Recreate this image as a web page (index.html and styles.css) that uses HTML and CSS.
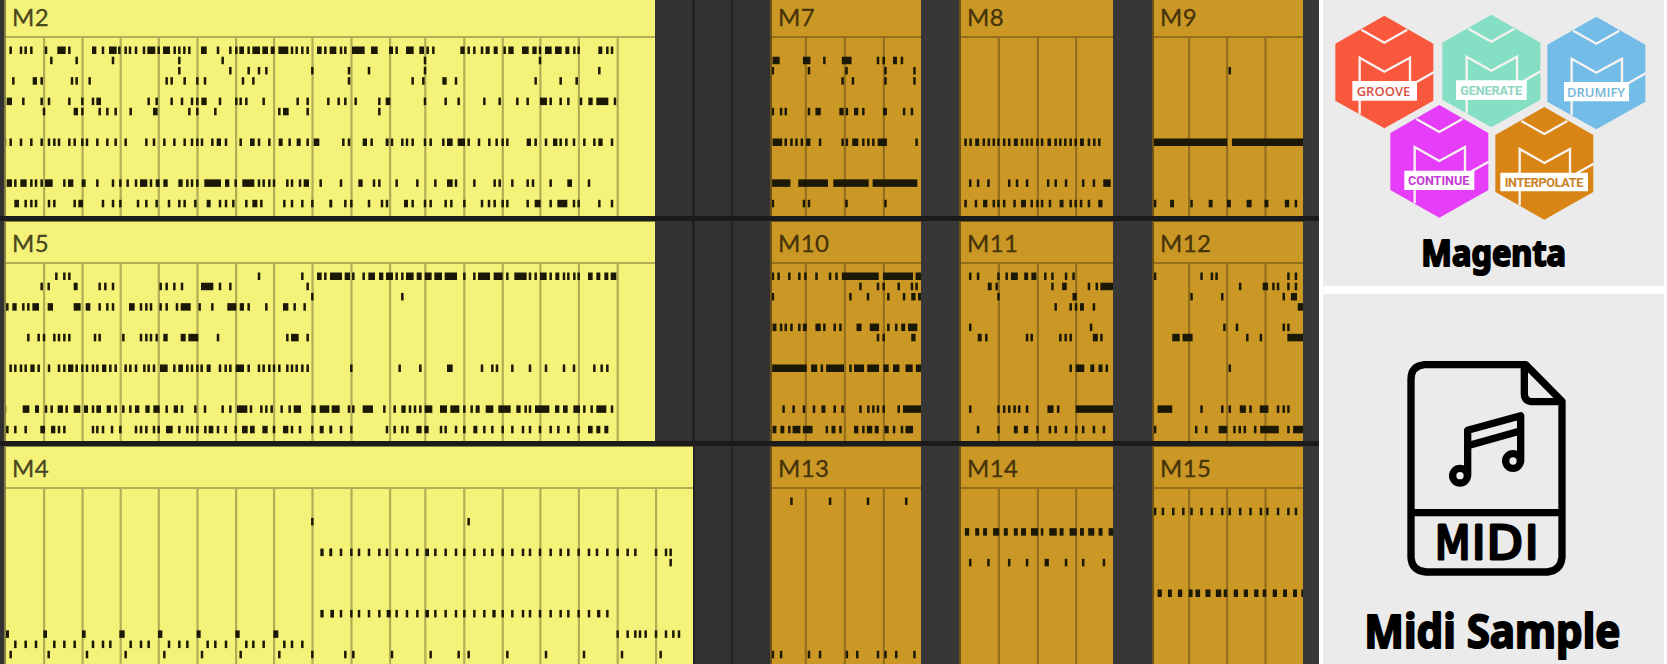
FILE: index.html
```html
<!DOCTYPE html>
<html lang="en">
<head>
<meta charset="utf-8">
<title>Arrangement</title>
<link rel="stylesheet" href="styles.css">
</head>
<body>
<main class="app">
  <section class="tracks">
    <div class="lane lane-top">
      <article class="clip lead" data-clip="M2"><h2 class="name">M2</h2></article>
      <article class="clip amber first" data-clip="M7"><h2 class="name">M7</h2></article>
      <article class="clip amber second" data-clip="M8"><h2 class="name">M8</h2></article>
      <article class="clip amber third" data-clip="M9"><h2 class="name">M9</h2></article>
    </div>
    <div class="lane">
      <article class="clip lead" data-clip="M5"><h2 class="name">M5</h2></article>
      <article class="clip amber first" data-clip="M10"><h2 class="name">M10</h2></article>
      <article class="clip amber second" data-clip="M11"><h2 class="name">M11</h2></article>
      <article class="clip amber third" data-clip="M12"><h2 class="name">M12</h2></article>
    </div>
    <div class="lane">
      <article class="clip lead long" data-clip="M4"><h2 class="name">M4</h2></article>
      <article class="clip amber first" data-clip="M13"><h2 class="name">M13</h2></article>
      <article class="clip amber second" data-clip="M14"><h2 class="name">M14</h2></article>
      <article class="clip amber third" data-clip="M15"><h2 class="name">M15</h2></article>
    </div>
  </section>
  <aside class="side">
    <section class="panel">
      <svg class="art" width="341" height="286" viewBox="39 0 1023 858">
        <defs>
          <path id="hex" d="M0 0L147 84V255L0 338L-147 255V84Z"/>
          <g id="lines" fill="none" stroke="#f8f3f1" stroke-width="7">
            <path d="M-69 42L0 81L69 42M-74 295V126L0 168L77 126V205M97 199L148 170"/>
          </g>
        </defs>
        <g transform="translate(223 47)"><use href="#hex" fill="#fa583d"/><use href="#lines"/></g>
        <g transform="translate(544 44)"><use href="#hex" fill="#84dfc4"/><use href="#lines"/></g>
        <g transform="translate(859 50)"><use href="#hex" fill="#72bce7"/><use href="#lines"/></g>
        <g transform="translate(388 315)"><use href="#hex" fill="#e53df8"/><use href="#lines"/></g>
        <g transform="translate(703 321)"><use href="#hex" fill="#d88515"/><use href="#lines"/></g>
        <g fill="#fff">
          <path d="M127 243h194v59H127zM438 241h212v59H438zM762 246h195v58H762zM283 512h210v58H283zM571 518h263v56H571z"/>
        </g>
        <text class="badge soft" x="140" y="288" textLength="161" lengthAdjust="spacingAndGlyphs" fill="#d94d40">GROOVE</text>
        <text class="badge" x="451" y="284" textLength="185" fill="#8dd5c2">GENERATE</text>
        <text class="badge soft" x="771" y="291" textLength="174" lengthAdjust="spacingAndGlyphs" fill="#74b5da">DRUMIFY</text>
        <text class="badge" x="294" y="555" textLength="184" fill="#c43bd4">CONTINUE</text>
        <text class="badge" x="584" y="560" textLength="236" fill="#c98226">INTERPOLATE</text>
        <text class="title" x="334" y="797" font-size="106" textLength="434" lengthAdjust="spacingAndGlyphs">Magenta</text>
      </svg>
    </section>
    <section class="panel grow">
      <svg class="art" width="341" height="370" viewBox="39 12 1023 1110">
        <g fill="none" stroke="#000" stroke-width="22" stroke-linejoin="round" stroke-linecap="round">
          <path d="M647 224H344Q303 228 303 268V802Q305 842 348 846H712Q752 842 756 802V334ZM643 230V314Q645 333 663 335H750M306 668H752"/>
          <path d="M473 556V421L632 377V513M478 466L628 424"/>
          <circle cx="450" cy="557" r="22"/>
          <circle cx="609" cy="513" r="22"/>
        </g>
        <text class="midi" y="807"><tspan x="375" textLength="106" lengthAdjust="spacingAndGlyphs">M</tspan><tspan x="486">I</tspan><tspan x="530" textLength="108" lengthAdjust="spacingAndGlyphs">D</tspan><tspan x="645">I</tspan></text>
        <text class="title" x="163" y="1074" font-size="138" textLength="768" lengthAdjust="spacingAndGlyphs">Midi Sample</text>
      </svg>
    </section>
  </aside>
</main>
<script src="clips.js"></script>
</body>
</html>
```
FILE: styles.css
```css
* { box-sizing: border-box; }
body { margin: 0; background: #fff; overflow: hidden; }
.app { display: flex; width: 1667px; height: 664px; gap: 4px; }

.tracks {
  flex: 0 0 1319px;
  display: flex;
  flex-direction: column;
  overflow: hidden;
  background:
    linear-gradient(#222, #222) 692px 0 / 3px 100% no-repeat,
    linear-gradient(#222, #222) 731px 0 / 2px 100% no-repeat,
    linear-gradient(90deg, #323232 770px, #373737 770px);
}
.lane {
  flex: 0 0 225.5px;
  display: flex;
  padding-left: 4px;
  border-bottom: 5px solid #1b1b1b;
}
.lane-top { margin-top: -5px; }

.clip {
  --fill: #f5f27a;
  --line: #b2ae56;
  --edge: #85823f;
  --ink: #49471f;
  flex: none;
  width: 651px;
  height: 220.5px;
  background: var(--fill);
  border-top: 1px solid var(--edge);
  border-left: 2px solid var(--edge);
  overflow: hidden;
}
.clip.long { width: 689px; }
.amber {
  --fill: #cb9826;
  --line: #95701c;
  --edge: #6f5215;
  --ink: #453309;
}
.first { width: 151px; margin-left: 115px; }
.long + .first { margin-left: 77px; }
.second { width: 154px; margin-left: 38px; }
.third { width: 151px; margin-left: 39px; }

.name {
  margin: 0;
  height: 42px;
  padding: 6px 0 0 6px;
  border-bottom: 2px solid var(--line);
  font: 400 24px/30px Lato, sans-serif;
  letter-spacing: 0.4px;
  color: var(--ink);
  -webkit-text-stroke: 0.3px var(--ink);
}
.roll { display: block; }
.roll .bar { fill: var(--line); }
.roll .note { fill: #1b1805; }

.side {
  flex: 0 0 341px;
  display: flex;
  flex-direction: column;
  gap: 8px;
}
.panel { background: #ebebeb; height: 286px; overflow: hidden; }
.grow { flex: 1; height: auto; }
.art { display: block; }
.badge { font: 700 38px Roboto, sans-serif; }
.soft { font: 600 39px "Open Sans", sans-serif; }
.title {
  font-family: "Noto Sans", sans-serif;
  font-weight: 700;
  stroke: #000;
  stroke-width: 6;
  stroke-linejoin: round;
}
.midi {
  font: 400 136px "DejaVu Sans", sans-serif;
  stroke: #000;
  stroke-width: 9;
  stroke-linejoin: round;
}
```
FILE: clips.js
```js
// Notes per clip: pitch row -> marks. "a" is a short hit, "a-b" a held note.
// A "|" starts the second page of a long clip.
const NOTES = {
  M2: {
    0: "32 63 77 94 138 172-197 208 276-289 309 327-350 358 377 390 408 432 442-466 476 489-510 524 538 553 568 603-620 654 691 709 718-732 746 757-780 787-804 812-824 835-865 876 890 907 923 951-965 976 989-1009 | 33 46 66-104 123-143 177-189 200 228-251 268-282 293 310 391-404 416 433 456 467-479 491-503 524 535-551 576-596 607-620 630 645-665 675-695 706-718 733 746 805-817 832 846",
    1: "154 230 339 538 668 | 285 630",
    2: "538 691 746 777 799 937 | 57 117 285 808",
    3: "40 98-111 125 216 230 269 500 515 554 592 615 729 760 | 57 248 280 337-350 378 617 692 740",
    5: "20-36 70 125 147 208 247 279 289-303 446 470 515 546 576 592 604-620 660 709 722 739 791 893 923 985 | 26 46 77 148 167-181 285 347 386 463 509 562 593 630-651 662 692 715 753 775-788 799-835 855",
    6: "132 221-234 247 299 322 347 392 459-473 568 592 646 838 849-866 923 | 148",
    9: "15 32 63 94 125 147 163 177 208 224 247 261 292 322 347 377 439 462 493 523 554 576 592 606 637 650-663 678 722 750-764 777 808 836-848 869 890-902 923 941-958 | 40 57 98-111 125 167-176 186 217 231 248 285 302 340 351-368 383-405 416 447 478 500 518 532 590-603 617 648 669-682 692 709 732 763 793 805-818 846",
    13: "20-36 46 61-80 94 108 125 135-158 193 204-220 245-257 292 339 361 383 408 420-442 453 467-479 490-503 535-548 562 576 592 613-663 675-688 707 727-763 777 791 808 822 862 876 900 911-927 962 | 33 85-98 132 148 200 262 316 351-368 378 433 494 509 547 593 609 662 712-726 777",
    15: "43-57 77 94 108 147 163 224 235-249 309 339 361 414 439 470 507 538 554 586 620-632 660 678 700 739 757-772 784 853 876 907 937 992 | 3 46 64 117 156 171 222-234 248 285 302 347 364 403 456 477 494 518 532 593 614-632 662 682-712 732 746 808 846"
  },
  M5: {
    0: "169 193 208 777 907 951-965 976 | 0-36 44-60 70 101 115-135 147-160 168-189 200 217 228-251 260-275 284-305 313-336 344-381 403 433 444-480 491-518 532 553-590 600 617 630-650 662 676-688 702 715 733 746 774-788 799-811 823-835 842-859",
    1: "125 146 221-233 299 316 339 482 500 523 546 603-640 660 691 923",
    2: "937 | 217",
    3: "22 37-50 70 85 97-117 143-159 221-242 257-271 299 322 339 387-404 423 439 453 482 500 531 542-572 599 637 682-709 719-732 746 799 849-865 884 914",
    6: "85 116 132 163 177 193 208 285 299 370 423 439 453 470 490-503 542-557 565-595 654 862 873-896 923",
    9: "32 46 63 77 91-104 116 147 177 193 204-220 230 247 261 279 292 306-319 331 347 377 391 408 433 446 462 480-503 523 535-549 562 576 592 605 620-632 660 677 691 707-732 746 777 791 808 822 838 862 876 890 907 923 | 64 209 271 351-368 456 487 501 547 600 648 702 732 793 815 832",
    13: "15 68-88 105-117 138 155 173-189 200 221-241 252-264 279 289-303 320-333 347 370 391 405-418 436-449 460-479 500 521-534 546 586 615 668 691 711-742 753 784 799 815 845 869 881-903 934-947 959-988 | 5-29 57 70 98-129 163 194 214-227 240 255 271 284-307 330-351 361-388 403 425 437-449 467-490 505-542 559-572 587 600 615-658 675-688 699-713 730-750 763 785 799-829 846",
    15: "22 46 77 121-135 153-166 177 193 279 292 309 336 361 408 423 439 462 476 498-518 538 562 576 592 616 626-640 654 677 707 726-743 750-764 787-803 822 849-865 876 900 937 959-971 992 | 3 33 64 171 194 217 232 259-275 283-296 333 347 378 403 430-442 463 487 518 547 579 600 630 662 685 715 746 774-788 799-811 823-835"
  },
  M4: {
    2: "937 | 416",
    5: "961-971 992 | 3 33 64 87 117 148 171 200 231 262 286-297 316 347 378 403 433 463 487 518 547 579 600 630 662 692 715 746 777 801 832 863 893 916 978 1008 1022",
    6: "| 1022",
    11: "961-971 991-1002 | 3-12 33 64 87 117 148 170-182 200 231 262 286-297 316 347 378 403 433 463 487-497 518 547 579 600 630 662 692 715 746 777 801-811 832",
    13: "13-27 130-141 246-257 358-374 474-487 590-602 706-719 820-835 | 863 893 916 930 947 978 1008 1030 1047",
    14: "46 77 108 163 193 224 279 309 331 392 423 446 507 538 562 623 646 678 739 760 791 853 876 907",
    15: "32 146 261 377 493 606 722 838 937 | 46 70 186 302 386 416 532 648 762 876 992"
  },
  M7: {
    1: "35-55 120-141 180 229-256 330 346 372-383 397",
    2: "36 137 242 351 432",
    3: "231 260 351 432",
    6: "36 59 72 137 155-170 222-234 243 263-275 289 344-355 403 425",
    9: "35-62 72 88 102 117 129-141 168 231 243 258-275 289 303 317 329-355 438",
    13: "34-85 107-190 205-304 315-440",
    15: "36 123 137 242 351"
  },
  M8: {
    9: "558 575 589 602-613 626 640 654 667 683 697 710-721 733 747 760 776 789 804-814 827 840 854 869 883 895-906 920 935 949",
    13: "588 610 639 697 719 747 806 827 856 904 934 960-981",
    15: "558 575 604 624-636 654 667 683 712 730-744 760 776 789 811 838-849 869 883 898 920 946-958"
  },
  M9: {
    2: "1314",
    9: "1100-1307 1320-1521",
    15: "1105 1147-1158 1207 1255-1266 1306-1317 1361-1375 1411-1422 1468-1480 1499"
  },
  M10: {
    0: "36 52 82 110 127 158 196 214 229-332 344-428 435-452",
    1: "281 330 346 388 425 438",
    2: "36 253 302 359 403 423-435 442-452",
    5: "35-46 59 72 88 110 120-131 155-170 180 209 225 270-284 307-333 359 381 395-406 414-440",
    6: "330 346 423-435",
    9: "34-131 143-160 173 185-235 253 263-291 300-333 345-360 372-390 407-427 436-452",
    13: "66 94 123 151 172-183 209 231 281 303 317 330 346 388 400-452",
    15: "35-46 57-68 82 91-113 120-147 187 200-211 225 263-275 289 299-314 321-332 348-360 375 397 407-428"
  },
  M11: {
    0: "558 588 610 667 690 702-721 739-750 759-773 798 818 856 877",
    1: "637-648 662 818 845-858 920 942 952-989",
    2: "667 874-886",
    3: "827 869 884 895-906 934",
    5: "588 926",
    6: "609-620 633 747 760 840 855 869 931-945 955",
    9: "869 883-907 924-935 947-958 970",
    13: "588 667 683 697 712 725 747 804-821 834 883-989",
    15: "558 610 667 710-721 738-750 776 811 827 856 885 904 934 962"
  },
  M12: {
    0: "1105 1235 1264 1277 1478 1499",
    1: "1343 1406-1421 1436 1449 1478 1499",
    2: "1207 1293 1465 1485-1502",
    3: "1504-1520",
    5: "1299 1334 1465 1478",
    6: "1153-1174 1182-1210 1363 1401 1475-1520",
    9: "1314",
    13: "1112-1153 1235 1293 1314 1342-1359 1372 1398-1422 1449 1465 1478",
    15: "1105 1220 1248 1283-1307 1327 1342 1356 1385 1399-1451 1478 1491-1520"
  },
  M13: {
    0: "88 196 302 409",
    15: "36 59 137 168 243 272 330 351 381 432"
  },
  M14: {
    3: "558 573-585 602-613 624-635 652-669 682-693 710-721 730-744 758-778 789 809-830 838-849 866-886 895-906 918-935 947-958 975-989",
    6: "588 639 697 747 796-808 856 904 962"
  },
  M15: {
    1: "1105 1127 1156 1184 1207 1235 1264 1293 1314 1343 1372 1401 1419 1449 1478 1499",
    9: "1112-1124 1141-1152 1169-1181 1199-1210 1218-1231 1246-1260 1275-1290 1297-1307 1325-1337 1353-1365 1382-1394 1406-1416 1434-1446 1463-1474 1491-1502 1514-1520"
  }
};

// Horizontal position of the bar lines, in window pixels.
const BARS = {
  lead: [43, 81.5, 119.6, 157.7, 196.4, 235, 273, 311.4, 350.4, 389, 424.2, 463.2, 501.7, 539.3, 577.8, 616.6, 655],
  first: [804.7, 843.8, 882.8],
  second: [997.8, 1036.8, 1075],
  third: [1188, 1226, 1264.4]
};
const LEFT = { lead: 6, first: 772, second: 961, third: 1154 };
const HIT = 2.5;
const NS = "http://www.w3.org/2000/svg";

function rect(svg, cls, x, y, w, h) {
  const r = document.createElementNS(NS, "rect");
  r.setAttribute("class", cls);
  r.setAttribute("x", x);
  r.setAttribute("y", y);
  r.setAttribute("width", w);
  r.setAttribute("height", h);
  svg.append(r);
}

document.querySelectorAll(".clip").forEach(clip => {
  const kind = Object.keys(LEFT).find(k => clip.classList.contains(k));
  const left = LEFT[kind];
  const svg = document.createElementNS(NS, "svg");
  svg.setAttribute("class", "roll");
  svg.setAttribute("width", clip.clientWidth);
  svg.setAttribute("height", 178);
  BARS[kind].forEach(x => rect(svg, "bar", x - left, 0, 2.2, 178));
  const scale = kind === "lead" ? 3 : 2.797;
  for (const [row, pages] of Object.entries(NOTES[clip.dataset.clip])) {
    const y = 8.5 + row * 10.22;
    pages.split("|").forEach((page, p) => {
      const origin = kind === "lead" ? p * 330 : 760;
      page.trim().split(/\s+/).filter(Boolean).forEach(mark => {
        const [a, b] = mark.split("-").map(Number);
        const x = origin + a / scale - left;
        if (b) rect(svg, "note", x, y, (b - a) / scale, 7.5);
        else rect(svg, "note", x - HIT / 2, y, HIT, 7.5);
      });
    });
  }
  clip.append(svg);
});
```
